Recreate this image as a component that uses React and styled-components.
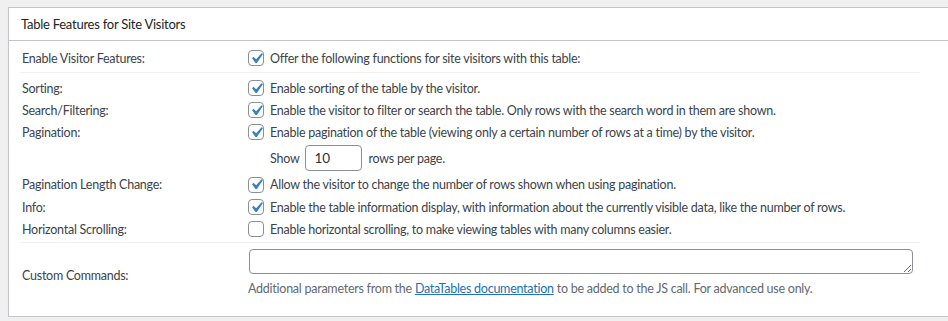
import React from "react";
import styled, { createGlobalStyle } from "styled-components";

const GlobalStyle = createGlobalStyle`
  html, body {
    margin: 0;
    padding: 0;
    overflow: hidden;
    background: #f0f0f1;
  }
  body {
    font-family: Lato, "Liberation Sans", sans-serif;
    font-size: 12.5px;
    letter-spacing: -0.25px;
    color: #3c434a;
  }
`;

const Page = styled.div`
  padding: 7px 0 0 8px;
  overflow: hidden;
`;

const Panel = styled.div`
  width: 1000px;
  background: #fff;
  border: 1px solid #c3c4c7;
  box-shadow: 0 1px 1px rgba(0, 0, 0, 0.04);
`;

const PanelTitle = styled.h2`
  margin: 0;
  height: 32px;
  padding: 0 12px;
  display: flex;
  align-items: center;
  font-size: 13px;
  font-weight: 400;
  color: #1d2327;
  border-bottom: 1px solid #c3c4c7;
`;

const PanelBody = styled.div`
  padding: 3px 11px 18px;
`;

const Section = styled.div`
  width: 900px;
  padding: ${(p) => p.$pad || "0"};
  border-bottom: ${(p) => (p.$last ? "none" : "1px solid #f0f0f1")};
  display: flex;
  flex-direction: column;
`;

const Row = styled.div`
  display: grid;
  grid-template-columns: 228px 1fr;
  align-items: center;
  min-height: ${(p) => p.$h ?? 22}px;
`;

const Label = styled.div`
  padding-left: 2px;
  padding-top: ${(p) => p.$shift || 0}px;
`;

const Field = styled.div`
  display: flex;
  flex-direction: column;
  gap: ${(p) => p.$gap || 0}px;
`;

const CheckLine = styled.label`
  display: flex;
  align-items: center;
  gap: 6px;
`;

const Box = styled.span`
  width: 16px;
  height: 16px;
  box-sizing: border-box;
  border: 1px solid #8c8f94;
  border-radius: 4px;
  background: #fff;
  display: flex;
  align-items: center;
  justify-content: center;
  flex: none;
  overflow: visible;
`;

const ShowLine = styled.div`
  display: flex;
  align-items: center;
  gap: 6px;
  padding-left: 22px;
`;

const NumberInput = styled.input`
  box-sizing: border-box;
  width: 57px;
  height: 26px;
  padding: 0 8px;
  border: 1px solid #8c8f94;
  border-radius: 4px;
  font: inherit;
  font-size: 13.5px;
  color: #2c3338;
  background: #fff;
`;

const TextArea = styled.textarea`
  box-sizing: border-box;
  width: 664px;
  height: 25px;
  margin-left: 1px;
  padding: 2px 6px;
  border: 1px solid #8c8f94;
  border-radius: 4px;
  font: inherit;
  display: block;
`;

const Help = styled.p`
  margin: 0;
  line-height: 18px;
  color: #646970;
`;

const Link = styled.a`
  color: #2271b1;
  text-decoration: underline;
`;

const Tick = styled.svg`
  flex: none;
  margin: -3px;
`;

function Checkbox({ checked }) {
  return (
    <Box>
      {checked && (
        <Tick width="21" height="21" viewBox="0 0 20 20">
          <path
            d="M14.83 4.89l1.34.94-5.81 8.38H9.02L5.78 9.67l1.34-1.25 2.57 2.4z"
            fill="#3582c4"
          />
        </Tick>
      )}
    </Box>
  );
}

function Option({ checked = true, children }) {
  return (
    <CheckLine>
      <Checkbox checked={checked} />
      <span>{children}</span>
    </CheckLine>
  );
}

export default function App() {
  return (
    <Page>
      <GlobalStyle />
      <Panel>
        <PanelTitle>Table Features for Site Visitors</PanelTitle>
        <PanelBody>
          <Section>
            <Row $h={28}>
              <Label>Enable Visitor Features:</Label>
              <Option>Offer the following functions for site visitors with this table:</Option>
            </Row>
          </Section>
          <Section $pad="4px 0 2px">
            <Row>
              <Label>Sorting:</Label>
              <Option>Enable sorting of the table by the visitor.</Option>
            </Row>
            <Row>
              <Label>Search/Filtering:</Label>
              <Option>
                Enable the visitor to filter or search the table. Only rows with the search word in them are shown.
              </Option>
            </Row>
            <Row>
              <Label>Pagination:</Label>
              <Option>
                Enable pagination of the table (viewing only a certain number of rows at a time) by the visitor.
              </Option>
            </Row>
            <Row $h={30}>
              <Label />
              <ShowLine>
                Show <NumberInput type="text" defaultValue="10" /> rows per page.
              </ShowLine>
            </Row>
            <Row $h={23}>
              <Label>Pagination Length Change:</Label>
              <Option>Allow the visitor to change the number of rows shown when using pagination.</Option>
            </Row>
            <Row>
              <Label>Info:</Label>
              <Option>
                Enable the table information display, with information about the currently visible data, like the number of rows.
              </Option>
            </Row>
            <Row>
              <Label>Horizontal Scrolling:</Label>
              <Option checked={false}>
                Enable horizontal scrolling, to make viewing tables with many columns easier.
              </Option>
            </Row>
          </Section>
          <Section $last $pad="6px 0 0">
            <Row $h={0}>
              <Label $shift={4}>Custom Commands:</Label>
              <Field $gap={6}>
                <TextArea rows={1} />
                <Help>
                  Additional parameters from the <Link href="#">DataTables documentation</Link> to be added to the JS call. For advanced use only.
                </Help>
              </Field>
            </Row>
          </Section>
        </PanelBody>
      </Panel>
    </Page>
  );
}
